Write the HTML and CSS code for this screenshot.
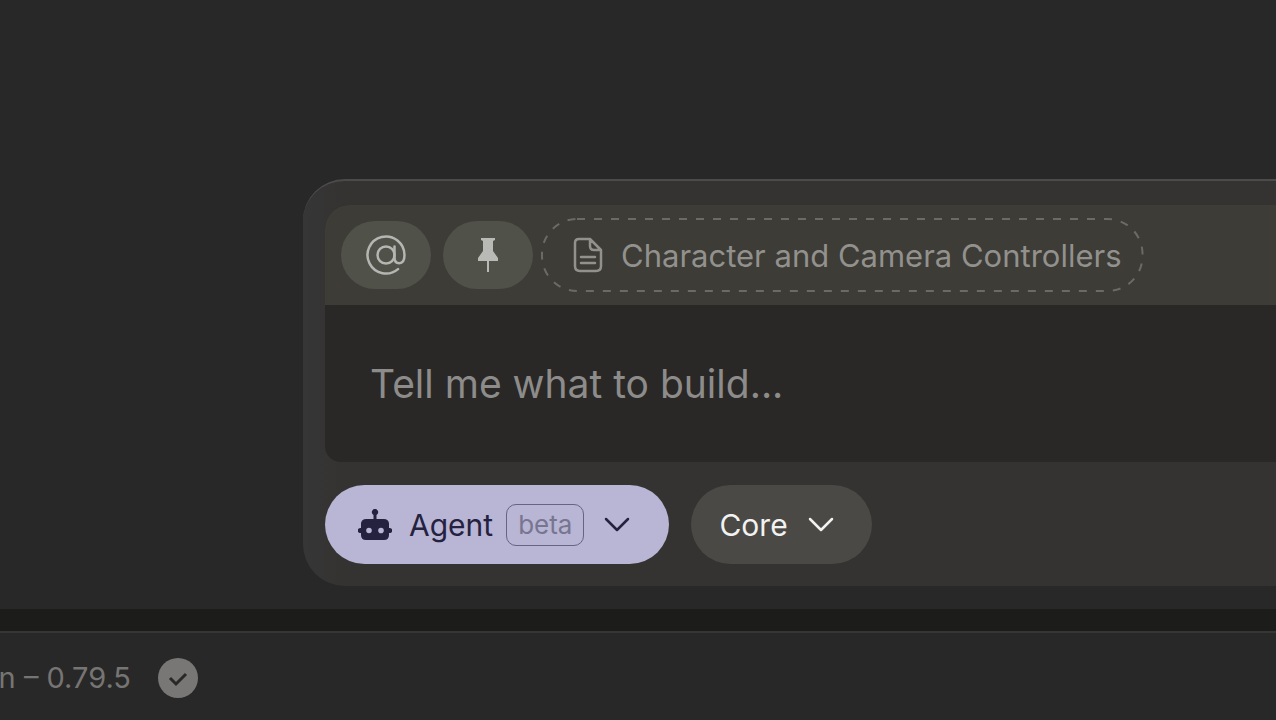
FILE: index.html
```html
<!DOCTYPE html>
<html lang="en">
  <head>
    <meta charset="utf-8">
    <title>Agent prompt</title>
    <link rel="stylesheet" href="styles.css">
  </head>

  <body>
    <main class="workspace">
      <form class="prompt-panel">
        <div class="prompt-box">
          <div class="context-bar">
            <button type="button" class="context-button" aria-label="Mention">
              <svg class="at-icon" viewBox="0 0 42 42">
                <circle cx="21" cy="21" r="8.5"/>
                <path d="M29.5 12.5V23.5C29.5 27 31.2 29.2 34.2 29.2C37.8 29.2 39.5 26 39.5 21A18.500 18.500 0 1 0 33 35.1"/>
              </svg>
            </button>
            <button type="button" class="context-button" aria-label="Pin">
              <svg class="pin-icon" viewBox="0 0 20 35">
                <path d="M3 0H17V2L15 3V13L20 20V23H11V34H9V23H0V20L5 13V3L3 2Z"/>
              </svg>
            </button>
            <button type="button" class="context-file">
              <svg class="file-outline"><rect x="1" y="1" rx="35"/></svg>
              <svg class="file-icon" viewBox="0 0 30 36">
                <path d="M6 2H17L28 13V29Q28 34 23 34H7Q2 34 2 29V6Q2 2 6 2ZM17 2V9Q17 13 21 13H28M8 20H22M8 26H22"/>
              </svg>
              Character and Camera Controllers
            </button>
          </div>
          <textarea class="prompt-input" aria-label="Prompt" placeholder="Tell me what to build..."></textarea>
        </div>

        <div class="mode-bar">
          <button type="button" class="mode-button agent">
            <svg class="robot-icon" viewBox="0 0 34 32">
              <path fill-rule="evenodd" d="M15.500 6A3.200 3.200 0 1 1 18.500 6V10H26Q30 10 31 14V19A2.600 2.600 0 1 1 31 24V26Q31 31 26 31H8Q3 31 3 26V24A2.600 2.600 0 1 1 3 19V14Q4 10 8 10H15.500ZM8.200 21.500A2.800 2.800 0 1 0 13.800 21.500A2.800 2.800 0 1 0 8.200 21.500ZM20.200 21.500A2.800 2.800 0 1 0 25.800 21.500A2.800 2.800 0 1 0 20.200 21.500Z"/>
            </svg>
            <span class="mode-name">Agent</span>
            <span class="beta-tag">beta</span>
            <svg class="chevron" viewBox="0 0 26 16"><path d="M2 2L13 13L24 2"/></svg>
          </button>
          <button type="button" class="mode-button core">
            <span class="mode-name">Core</span>
            <svg class="chevron" viewBox="0 0 26 16"><path d="M2 2L13 13L24 2"/></svg>
          </button>
        </div>
      </form>
    </main>

    <footer class="status-bar">
      <span class="version">n – 0.79.5</span>
      <svg class="check-icon" viewBox="0 0 40 40">
        <circle cx="20" cy="20" r="20"/>
        <path d="M12 20L18 26L28 16"/>
      </svg>
    </footer>
  </body>
</html>
```

FILE: styles.css
```css
* {
  box-sizing: border-box;
}

body {
  margin: 0;
  min-height: 100vh;
  display: flex;
  flex-direction: column;
  overflow: hidden;
  background: #292828;
  font-family: Inter, "Liberation Sans", sans-serif;
}

button {
  display: flex;
  align-items: center;
  border: 0;
  font: inherit;
}

svg {
  flex: none;
  fill: none;
}

/* prompt area */
.workspace {
  flex: 1;
  display: flex;
  flex-direction: column;
  justify-content: flex-end;
  padding: 0 0 23px 303px;
}

.prompt-panel {
  padding: 24px 0 22px 22px;
  border-top: 2px solid #4b4b4b;
  border-radius: 42px 0 0 42px;
  background: linear-gradient(90deg, #373637, #343331 40px);
}

.prompt-box {
  overflow: hidden;
  border-radius: 24px 0 0 16px;
  background: #292826;
}

.context-bar {
  display: flex;
  align-items: center;
  height: 100px;
  padding-left: 16px;
  background: #3d3c37;
}

.context-button {
  justify-content: center;
  width: 90px;
  height: 68px;
  margin-right: 12px;
  padding: 0;
  border-radius: 34px;
  background: #505149;
}

.at-icon {
  width: 42px;
  height: 42px;
  stroke: #b5b5b1;
  stroke-width: 2.5;
  stroke-linecap: round;
}

.pin-icon {
  width: 20px;
  height: 35px;
  fill: #b9b9b5;
}

.context-file {
  position: relative;
  height: 74px;
  margin-left: -4px;
  padding: 0 22px 0 32px;
  gap: 18px;
  background: none;
  color: #92918d;
  font-size: 31px;
  white-space: nowrap;
}

/* dashed pill drawn around the file name */
.file-outline {
  position: absolute;
  inset: 0;
  width: 100%;
  height: 100%;
  stroke: #6b6a66;
  stroke-width: 2;
  stroke-dasharray: 8 9;
}

.file-outline rect {
  width: calc(100% - 2px);
  height: calc(100% - 2px);
}

.file-icon {
  width: 30px;
  height: 36px;
  stroke: #92918d;
  stroke-width: 2.5;
  stroke-linecap: round;
  stroke-linejoin: round;
}

.prompt-input {
  display: block;
  width: 100%;
  height: 157px;
  padding: 55px 45px;
  border: 0;
  outline: 0;
  resize: none;
  background: transparent;
  color: #d0d0ce;
  font: inherit;
  font-size: 39px;
  line-height: 48px;
}

.prompt-input::placeholder {
  color: #8d8c8a;
}

/* mode buttons */
.mode-bar {
  display: flex;
  gap: 22px;
  padding-top: 23px;
}

.mode-button {
  height: 79px;
  border-radius: 40px;
  font-size: 30px;
}

.agent {
  padding: 0 39px 0 33px;
  background: #b8b5d5;
  color: #24223f;
}

.core {
  padding: 0 38px 0 28px;
  background: #4a4946;
  color: #f2f2f0;
}

.robot-icon {
  width: 34px;
  height: 32px;
  margin-right: 17px;
  fill: currentColor;
}

.beta-tag {
  height: 42px;
  margin-left: 13px;
  padding: 0 11px;
  border: 1px solid #66647f;
  border-radius: 10px;
  color: #77758f;
  font-size: 26px;
  line-height: 40px;
}

.chevron {
  width: 26px;
  height: 16px;
  margin-left: 20px;
  stroke: currentColor;
  stroke-width: 2.5;
  stroke-linecap: round;
  stroke-linejoin: round;
}

/* status bar */
.status-bar {
  display: flex;
  align-items: center;
  gap: 27px;
  height: 111px;
  padding-top: 4px;
  border-top: 22px solid #1c1c1a;
  background: linear-gradient(#363635 2px, #292828 2px);
}

.version {
  display: flex;
  justify-content: flex-end;
  width: 131px;
  color: #767573;
  font-size: 29px;
  white-space: nowrap;
}

.check-icon {
  width: 40px;
  height: 40px;
}

.check-icon circle {
  fill: #787775;
}

.check-icon path {
  stroke: #292828;
  stroke-width: 3;
}
```
